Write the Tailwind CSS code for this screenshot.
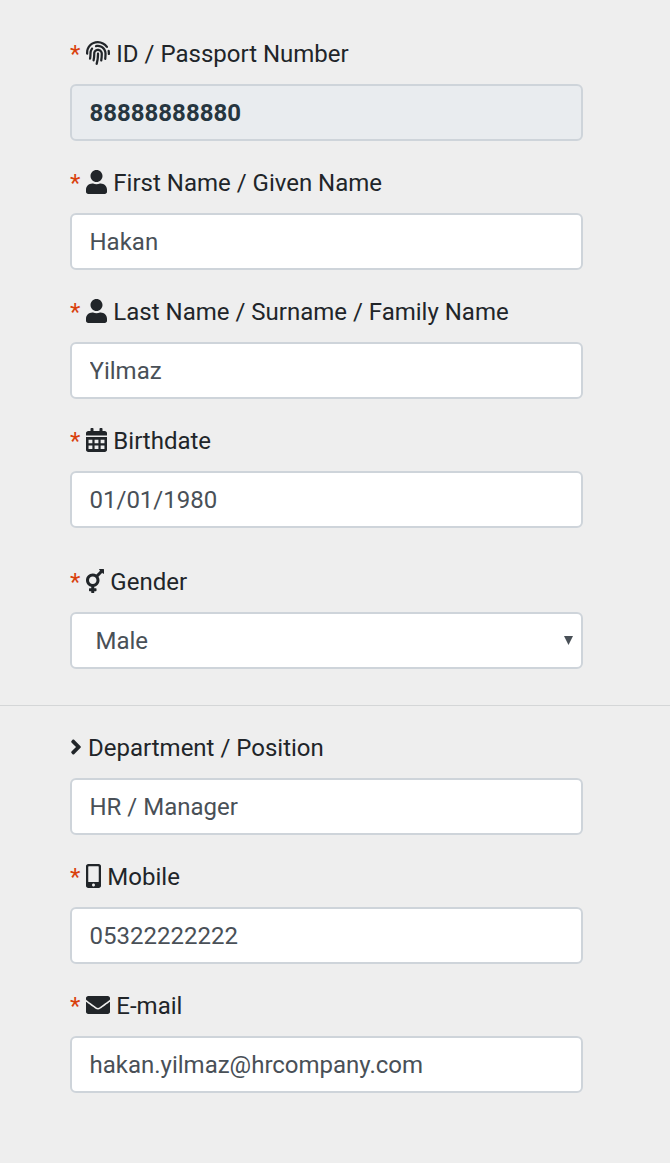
<!DOCTYPE html>
<html lang="en">
<head>
  <meta charset="UTF-8">
  <meta name="viewport" content="width=device-width, initial-scale=1.0">
  <title>Employee details</title>
  <script src="https://cdn.jsdelivr.net/npm/@tailwindcss/browser@4"></script>
</head>
<body class="bg-[#eeeeee] font-[Roboto,sans-serif] text-2xl leading-9 text-[#212529]">
  <form>
    <section class="flex flex-col gap-6 pl-[70px] pr-[87px] pt-9 pb-9">
      <div class="flex flex-col gap-3">
        <label for="passport" class="flex h-9 items-center gap-1.5">
          <span class="text-[#d9400b]">*</span>
          <svg class="-mt-0.5 h-6 w-6" viewBox="0 0 512 512" fill="currentColor"><path d="M256.12 245.96c-13.25 0-24 10.74-24 24 1.14 72.25-8.14 141.9-27.7 211.55-2.73 9.72 2.15 30.49 23.12 30.49 10.48 0 20.11-6.92 23.09-17.52 13.53-47.91 31.04-125.41 29.48-224.52.01-13.25-10.73-24-23.99-24zm-.86-81.73C194 164.16 151.25 211.3 152.1 265.32c.75 47.75-3.75 95.87-13.37 142.5-2.69 12.98 5.67 25.69 18.64 28.36 12.97 2.67 25.67-5.66 28.36-18.64 10.34-50.09 15.17-101.58 14.37-153.02-.41-25.95 19.92-52.49 54.45-52.34 31.31.47 57.15 25.34 57.62 55.47.77 48.05-2.81 96.33-10.61 143.55-2.17 13.06 6.69 25.42 19.76 27.58 19.97 3.33 26.81-15.1 27.58-19.77 8.28-50.03 12.06-101.21 11.27-152.11-.88-55.8-47.94-101.88-104.91-102.72zm-110.69-19.78c-10.3-8.34-25.37-6.8-33.76 3.48-25.62 31.5-39.39 71.28-38.75 112 .59 37.58-2.47 75.27-9.11 112.05-2.34 13.05 6.31 25.53 19.36 27.89 20.11 3.5 27.07-14.81 27.89-19.36 7.19-39.84 10.5-80.66 9.86-121.33-.47-29.88 9.2-57.88 28-80.97 8.35-10.28 6.79-25.39-3.49-33.76zm109.47-62.33c-15.41-.41-30.87 1.44-45.78 4.97-12.89 3.06-20.87 15.98-17.83 28.89 3.06 12.89 16 20.83 28.89 17.83 11.05-2.61 22.47-3.77 34-3.69 75.43 1.13 137.73 61.5 138.88 134.58.59 37.88-1.28 76.11-5.58 113.63-1.5 13.17 7.95 25.08 21.11 26.58 16.72 1.95 25.51-11.88 26.58-21.11a929.06 929.06 0 0 0 5.89-119.85c-1.56-98.75-85.07-180.33-186.16-181.83zm252.07 121.45c-2.86-12.92-15.51-21.2-28.61-18.27-12.94 2.86-21.12 15.66-18.26 28.61 4.71 21.41 4.91 37.41 4.7 61.6-.11 13.27 10.55 24.09 23.8 24.2h.2c13.17 0 23.89-10.61 24-23.8.18-22.18.4-44.11-5.83-72.34zm-40.12-90.72C417.29 43.46 337.6 1.29 252.81.02 183.02-.82 118.47 24.91 70.46 72.94 24.09 119.37-.9 181.04.14 246.65l-.12 21.47c-.39 13.25 10.03 24.31 23.28 24.69.23.02.48.02.72.02 12.92 0 23.59-10.3 23.97-23.3l.16-23.64c-.83-52.5 19.16-101.86 56.28-139 38.76-38.8 91.34-59.67 147.68-58.86 69.45 1.03 134.73 35.56 174.62 92.39 7.61 10.86 22.56 13.45 33.42 5.86 10.84-7.62 13.46-22.59 5.84-33.43z"/></svg>
          <span>ID / Passport Number</span>
        </label>
        <input id="passport" type="text" value="88888888880" readonly class="h-[57px] w-full rounded-md border-2 border-[#ced4da] bg-[#e9ecef] px-[17.5px] font-bold text-[#263640] outline-none">
      </div>

      <div class="flex flex-col gap-3">
        <label for="first" class="flex h-9 items-center gap-1.5">
          <span class="text-[#d9400b]">*</span>
          <svg class="-mt-0.5 h-6 w-[21px]" viewBox="0 0 448 512" fill="currentColor"><path d="M224 256c70.7 0 128-57.3 128-128S294.7 0 224 0 96 57.3 96 128s57.3 128 128 128zm89.6 32h-16.7c-22.2 10.2-46.9 16-72.9 16s-50.6-5.8-72.9-16h-16.7C60.2 288 0 348.2 0 422.4V464c0 26.5 21.5 48 48 48h352c26.5 0 48-21.5 48-48v-41.6c0-74.2-60.2-134.4-134.4-134.4z"/></svg>
          <span>First Name / Given Name</span>
        </label>
        <input id="first" type="text" value="Hakan" class="h-[57px] w-full rounded-md border-2 border-[#ced4da] bg-white px-[17.5px] text-[#495057] outline-none">
      </div>

      <div class="flex flex-col gap-3">
        <label for="last" class="flex h-9 items-center gap-1.5">
          <span class="text-[#d9400b]">*</span>
          <svg class="-mt-0.5 h-6 w-[21px]" viewBox="0 0 448 512" fill="currentColor"><path d="M224 256c70.7 0 128-57.3 128-128S294.7 0 224 0 96 57.3 96 128s57.3 128 128 128zm89.6 32h-16.7c-22.2 10.2-46.9 16-72.9 16s-50.6-5.8-72.9-16h-16.7C60.2 288 0 348.2 0 422.4V464c0 26.5 21.5 48 48 48h352c26.5 0 48-21.5 48-48v-41.6c0-74.2-60.2-134.4-134.4-134.4z"/></svg>
          <span>Last Name / Surname / Family Name</span>
        </label>
        <input id="last" type="text" value="Yilmaz" class="h-[57px] w-full rounded-md border-2 border-[#ced4da] bg-white px-[17.5px] text-[#495057] outline-none">
      </div>

      <div class="flex flex-col gap-3">
        <label for="birth" class="flex h-9 items-center gap-1.5">
          <span class="text-[#d9400b]">*</span>
          <svg class="-mt-0.5 h-6 w-[21px]" viewBox="0 0 448 512" fill="currentColor" fill-rule="evenodd"><path d="M0 464c0 26.5 21.5 48 48 48h352c26.5 0 48-21.5 48-48V192H0v272zM54 252h82v72H54zM183 252h82v72h-82zM312 252h82v72h-82zM54 374h82v72H54zM183 374h82v72h-82zM312 374h82v72h-82zM400 64h-48V16c0-8.800-7.200-16-16-16h-32c-8.800 0-16 7.200-16 16v48H160V16c0-8.800-7.200-16-16-16h-32c-8.800 0-16 7.200-16 16v48H48C21.500 64 0 85.500 0 112v48h448v-48c0-26.500-21.500-48-48-48z"/></svg>
          <span>Birthdate</span>
        </label>
        <input id="birth" type="text" value="01/01/1980" class="h-[57px] w-full rounded-md border-2 border-[#ced4da] bg-white px-[17.5px] text-[#495057] outline-none">
      </div>

      <div class="mt-3 flex flex-col gap-3">
        <label for="gender" class="flex h-9 items-center gap-1.5">
          <span class="text-[#d9400b]">*</span>
          <svg class="-mt-0.5 h-6 w-[18px]" viewBox="0 0 384 512" fill="currentColor"><path d="M372 0h-79c-10.700 0-16 12.900-8.500 20.500l16.900 16.900-80.700 80.700C198.500 104.100 172.200 96 144 96 64.500 96 0 160.500 0 240c0 68.500 47.900 125.900 112 140.400V408H76c-6.600 0-12 5.400-12 12v40c0 6.600 5.400 12 12 12h36v28c0 6.600 5.400 12 12 12h40c6.600 0 12-5.400 12-12v-28h36c6.600 0 12-5.400 12-12v-40c0-6.600-5.400-12-12-12h-36v-27.600c64.100-14.600 112-71.900 112-140.400 0-28.200-8.100-54.500-22.100-76.700l80.700-80.700 16.900 16.900c7.600 7.600 20.500 2.200 20.500-8.500V12c0-6.600-5.400-12-12-12zM144 320c-44.100 0-80-35.900-80-80s35.900-80 80-80 80 35.900 80 80-35.900 80-80 80z"/></svg>
          <span>Gender</span>
        </label>
        <div class="relative h-[57px]">
          <select id="gender" class="h-full w-full appearance-none rounded-md border-2 border-[#ced4da] bg-white px-[23.5px] text-[#495057] outline-none">
            <option>Male</option>
            <option>Female</option>
          </select>
          <svg class="pointer-events-none absolute right-[10px] top-6 h-[9px] w-[9px]" viewBox="0 0 9 9" fill="#495057"><path d="M0 0h9L4.500 9z"/></svg>
        </div>
      </div>
    </section>

    <hr class="border-[#d4d6d7]">

    <section class="flex flex-col gap-6 pl-[70px] pr-[87px] pt-6 pb-[70px]">
      <div class="flex flex-col gap-3">
        <label for="position" class="flex h-9 items-center gap-1.5">
          <svg class="-mt-0.5 h-6 w-3" viewBox="0 0 256 512" fill="currentColor"><path d="M224.300 273l-136 136c-9.400 9.400-24.600 9.400-33.900 0l-22.600-22.600c-9.400-9.400-9.400-24.600 0-33.900l96.400-96.400-96.400-96.400c-9.400-9.400-9.400-24.600 0-33.900L54.300 103c9.400-9.400 24.600-9.400 33.900 0l136 136c9.500 9.400 9.500 24.600.1 34z"/></svg>
          <span>Department / Position</span>
        </label>
        <input id="position" type="text" value="HR / Manager" class="h-[57px] w-full rounded-md border-2 border-[#ced4da] bg-white px-[17.5px] text-[#495057] outline-none">
      </div>

      <div class="flex flex-col gap-3">
        <label for="mobile" class="flex h-9 items-center gap-1.5">
          <span class="text-[#d9400b]">*</span>
          <svg class="-mt-0.5 h-6 w-[15px]" viewBox="0 0 320 512" fill="currentColor"><path d="M272 0H48C21.500 0 0 21.500 0 48v416c0 26.500 21.500 48 48 48h224c26.500 0 48-21.500 48-48V48c0-26.500-21.500-48-48-48zM160 480c-17.700 0-32-14.300-32-32s14.300-32 32-32 32 14.300 32 32-14.300 32-32 32zm112-108c0 6.600-5.400 12-12 12H60c-6.600 0-12-5.400-12-12V60c0-6.600 5.400-12 12-12h200c6.600 0 12 5.400 12 12v312z"/></svg>
          <span>Mobile</span>
        </label>
        <input id="mobile" type="text" value="05322222222" class="h-[57px] w-full rounded-md border-2 border-[#ced4da] bg-white px-[17.5px] text-[#495057] outline-none">
      </div>

      <div class="flex flex-col gap-3">
        <label for="email" class="flex h-9 items-center gap-1.5">
          <span class="text-[#d9400b]">*</span>
          <svg class="-mt-0.5 h-6 w-6" viewBox="0 0 512 512" fill="currentColor"><path d="M502.300 190.800c3.900-3.100 9.700-.2 9.700 4.700V400c0 26.500-21.500 48-48 48H48c-26.500 0-48-21.500-48-48V195.600c0-5 5.700-7.800 9.700-4.700 22.400 17.400 52.100 39.500 154.100 113.600 21.100 15.400 56.700 47.800 92.200 47.600 35.700.3 72-32.800 92.300-47.600 102-74.100 131.600-96.300 154-113.700zM256 320c23.200.4 56.600-29.200 73.400-41.400 132.700-96.300 142.800-104.700 173.400-128.700 5.800-4.500 9.200-11.500 9.200-18.900v-19c0-26.500-21.500-48-48-48H48c-26.500 0-48 21.500-48 48v19c0 7.400 3.400 14.300 9.200 18.900 30.600 23.900 40.700 32.400 173.400 128.700 16.800 12.200 50.200 41.800 73.400 41.400z"/></svg>
          <span>E-mail</span>
        </label>
        <input id="email" type="text" value="hakan.yilmaz@hrcompany.com" class="h-[57px] w-full rounded-md border-2 border-[#ced4da] bg-white px-[17.5px] text-[#495057] outline-none">
      </div>
    </section>
  </form>
</body>
</html>
